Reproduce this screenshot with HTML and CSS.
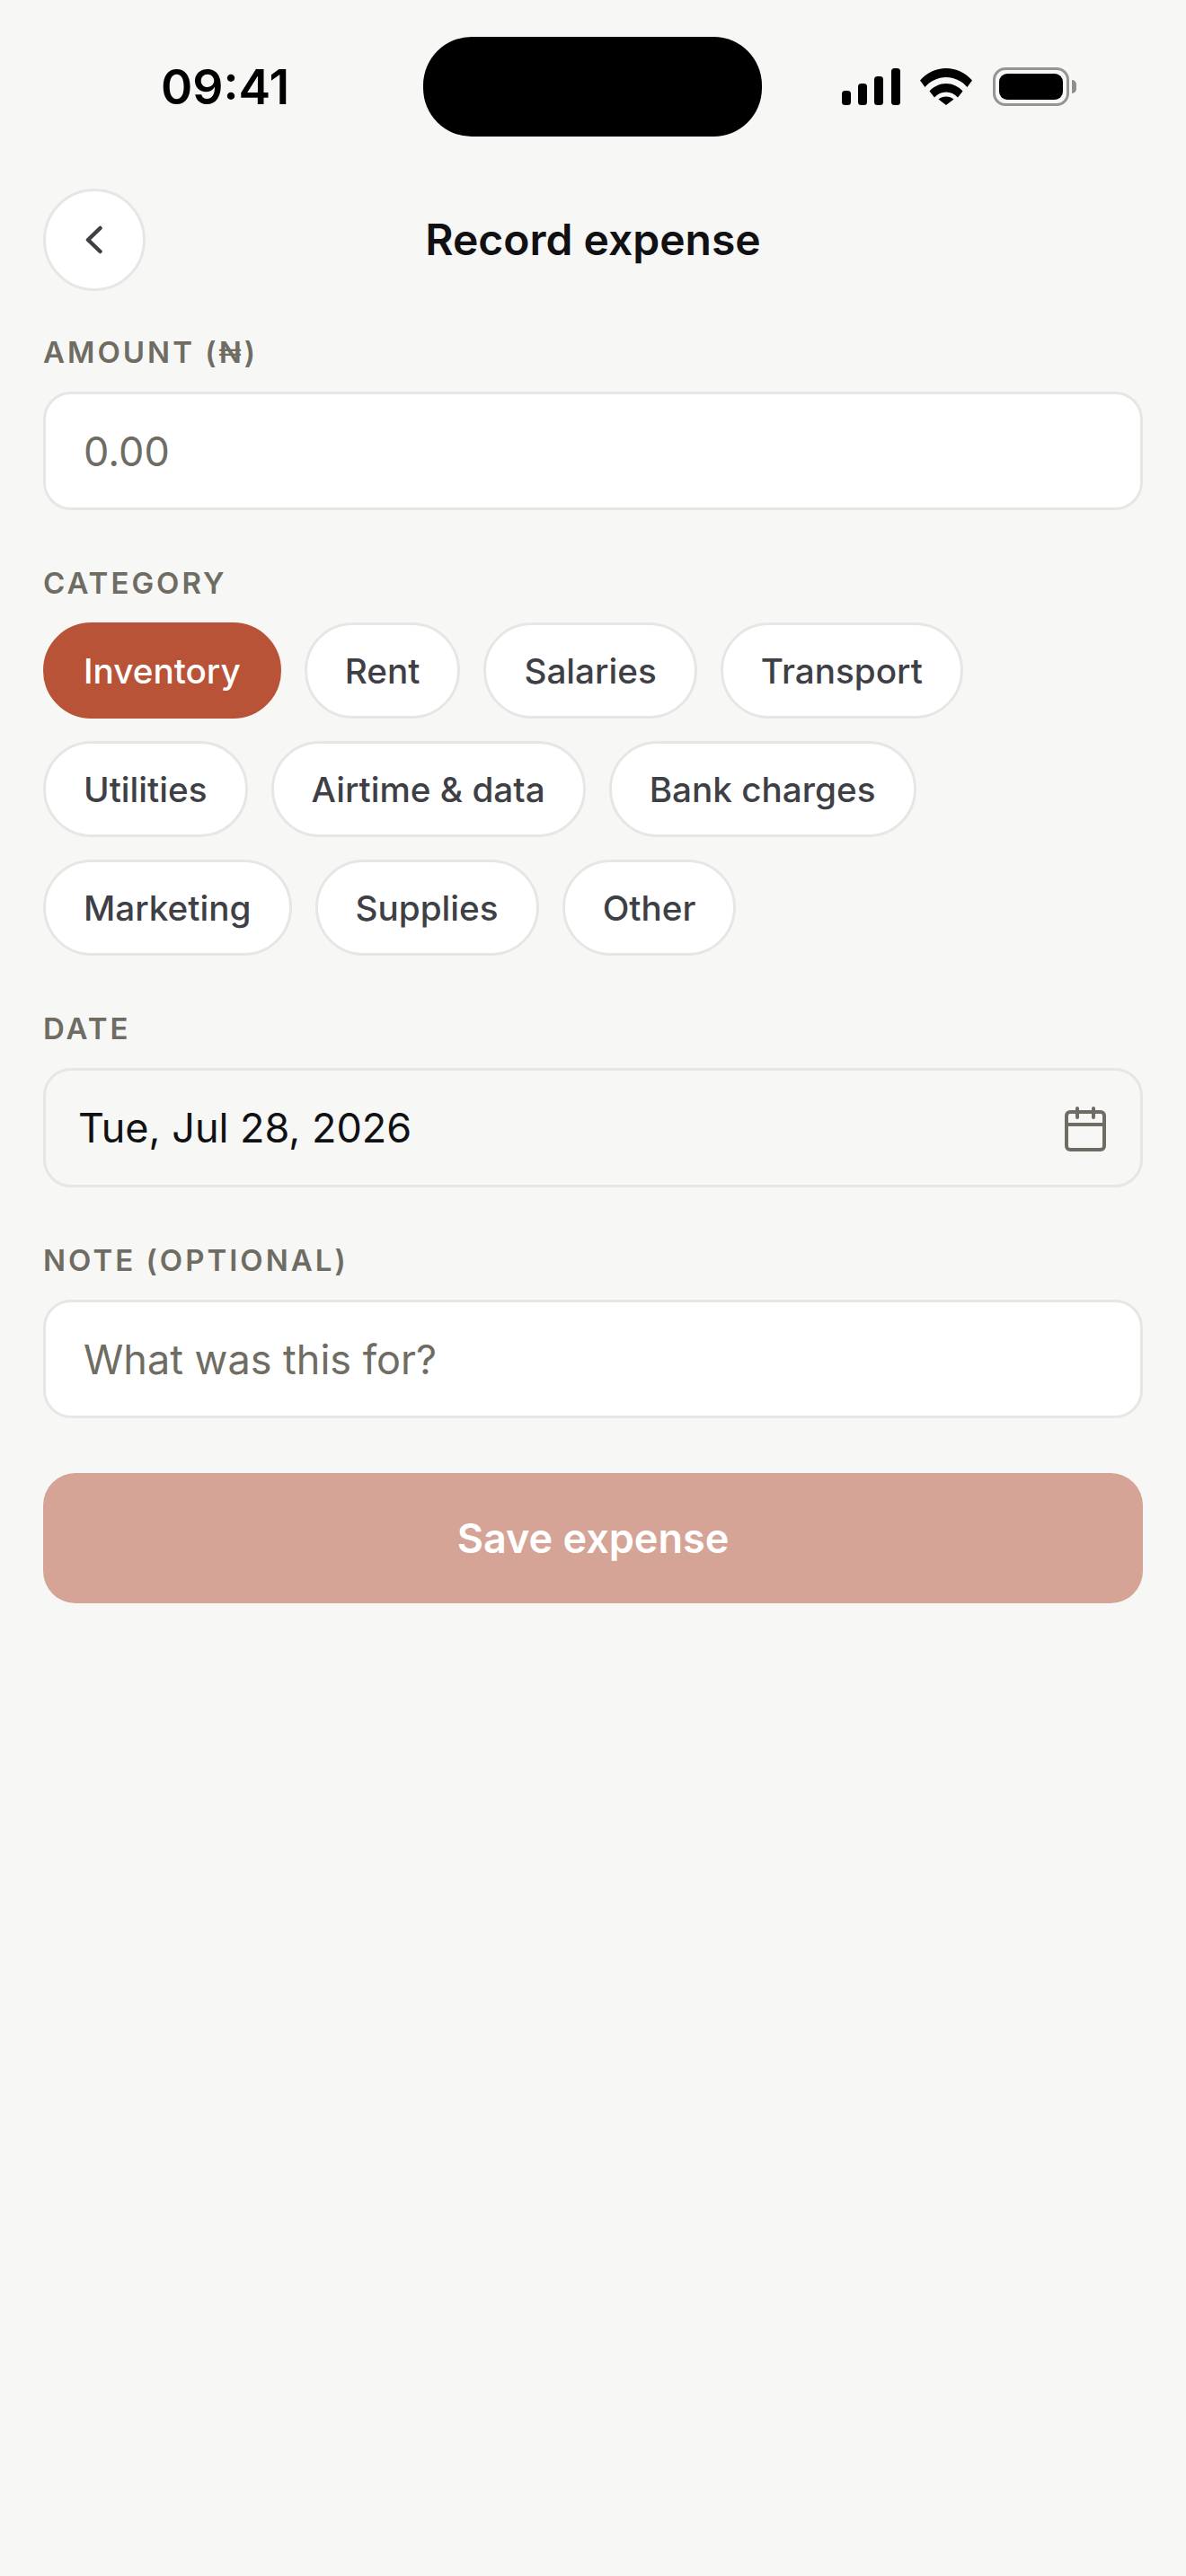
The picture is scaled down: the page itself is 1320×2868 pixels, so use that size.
FILE: index.html
```html
<!DOCTYPE html>
<html lang="en">
<head>
<meta charset="utf-8">
<title>Record expense</title>
<link rel="stylesheet" href="styles.css">
</head>
<body>
<div class="screen">
  <header class="status">
    <div class="status-left"><span class="time">09:41</span></div>
    <div class="island"></div>
    <div class="status-right">
      <svg class="signal" width="65" height="41" viewBox="0 0 65 41"><rect x="0" y="25" width="10" height="16" rx="3.5"/><rect x="18" y="17" width="10" height="24" rx="3.5"/><rect x="36" y="9" width="10" height="32" rx="3.5"/><rect x="55" y="0" width="10" height="41" rx="3.5"/></svg>
      <svg class="wifi" width="58" height="42" viewBox="0 0 58 42"><path d="M0 13.5C7.500 5 18 0 29 0S50.500 5 58 13.500L52.500 21C46.500 14 38 10 29 10S11.500 14 5.500 21Z"/><path d="M10.500 25.500C15.500 20 22 17 29 17S42.500 20 47.500 25.500L42 32.500C38.500 28.500 34 26.500 29 26.500S19.500 28.500 16 32.500Z"/><path d="M20.500 35.500C22.800 33.500 25.800 32.500 29 32.500S35.200 33.500 37.500 35.500L29 42Z" transform="translate(0 -1)"/></svg>
      <div class="battery"><div class="battery-body"><div class="battery-fill"></div></div><div class="battery-cap"></div></div>
    </div>
  </header>

  <main class="content">
    <div class="topbar">
      <button class="back" type="button" aria-label="Back">
        <svg width="48" height="48" viewBox="0 0 48 48" fill="none"><path d="M30.500 11 L17 24 L30.500 37" stroke="#3f3f46" stroke-width="4.500" stroke-linecap="round" stroke-linejoin="round"/></svg>
      </button>
      <h1 class="title">Record expense</h1>
    </div>

    <label class="label first">AMOUNT (₦)</label>
    <input class="field" type="text" placeholder="0.00">

    <div class="label">CATEGORY</div>
    <div class="chips">
      <span class="chip active">Inventory</span>
      <span class="chip">Rent</span>
      <span class="chip">Salaries</span>
      <span class="chip">Transport</span>
      <span class="chip">Utilities</span>
      <span class="chip">Airtime &amp; data</span>
      <span class="chip">Bank charges</span>
      <span class="chip">Marketing</span>
      <span class="chip">Supplies</span>
      <span class="chip">Other</span>
    </div>

    <div class="label">DATE</div>
    <div class="date">
      <span>Tue, Jul 28, 2026</span>
      <svg class="cal" width="46" height="50" viewBox="0 0 46 50" fill="none" stroke="#6f6c64" stroke-width="4"><rect x="2" y="6" width="42" height="42" rx="4"/><path d="M2 20H44"/><path d="M14 2V12M32 2V12" stroke-linecap="round"/></svg>
    </div>

    <div class="label">NOTE (OPTIONAL)</div>
    <input class="field" type="text" placeholder="What was this for?">

    <button class="save" type="button">Save expense</button>
  </main>
</div>
</body>
</html>
```
FILE: styles.css
```css
* { box-sizing: border-box; }
html, body { margin: 0; padding: 0; }
body {
  background: #f7f7f5;
  font-family: Inter, "Liberation Sans", sans-serif;
  color: #111114;
}
.screen { width: 1320px; height: 2868px; overflow: hidden; background: #f7f7f5; }

.status {
  display: grid;
  grid-template-columns: 471px 377px 472px;
  align-items: center;
  height: 193px;
  padding-top: 0;
}
.status-left { padding-left: 179px; }
.time { font-size: 53.5px; font-weight: 600; line-height: 1; color: #000; display: block; }
.island { height: 111px; width: 377px; background: #000; border-radius: 54px; margin-top: 0; }
.status-right { display: flex; align-items: center; padding-left: 89px; }
.signal { fill: #000; display: block; }
.wifi { fill: #000; display: block; margin-left: 22px; }
.battery { display: flex; align-items: center; margin-left: 23px; }
.battery-body { width: 85px; height: 43px; border: 3px solid #959595; border-radius: 14px; padding: 4px; }
.battery-fill { width: 100%; height: 100%; background: #000; border-radius: 9px; }
.battery-cap { width: 5px; height: 15px; margin-left: 3px; background: #8e8e8e; border-radius: 0 6px 6px 0; }

.content { padding: 17px 48px 0; }
.topbar { position: relative; display: flex; align-items: center; justify-content: center; height: 114px; }
.back {
  position: absolute; left: 0; top: 0;
  width: 114px; height: 114px; padding: 0;
  display: flex; align-items: center; justify-content: center;
  border: 3px solid #e4e8e4; border-radius: 50%; background: #fff;
}
.title { margin: 0; font-size: 48px; font-weight: 600; line-height: 1.2; color: #111114; }

.label {
  font-size: 33px; font-weight: 600; line-height: 40px; letter-spacing: 3px;
  color: #6f6c64; margin: 61px 0 24px; display: block;
}
.label.first { margin-top: 48px; }

.field {
  display: block; width: 100%; height: 132px;
  padding: 0 42px;
  border: 3px solid #e4e8e4; border-radius: 31px;
  background: #fff; outline: none;
  font: 400 45px Inter, "Liberation Sans", sans-serif; color: #111114;
}
.field::placeholder { color: #6f6c64; opacity: 1; }

.chips { display: flex; flex-wrap: wrap; gap: 25px 26px; }
.chip {
  display: flex; align-items: center; height: 107px; padding: 0 42px;
  border: 3px solid #e4e8e4; border-radius: 54px; background: #fff;
  font-size: 38.7px; font-weight: 500; color: #3f3f46;
}
.chip.active { background: #b85338; border-color: #b85338; color: #fff; }

.date {
  display: flex; align-items: center; justify-content: space-between;
  height: 133px; padding: 0 38px 0 36px;
  border: 3px solid #e4e8e4; border-radius: 31px;
  font-size: 45px; font-weight: 400; color: #111114;
}
.cal { display: block; margin-top: 3px; }

.save {
  display: block; width: 100%; height: 145px; margin-top: 61px;
  border: 0; border-radius: 36px; background: #d6a496; color: #fff;
  font: 600 45px Inter, "Liberation Sans", sans-serif;
}
```
